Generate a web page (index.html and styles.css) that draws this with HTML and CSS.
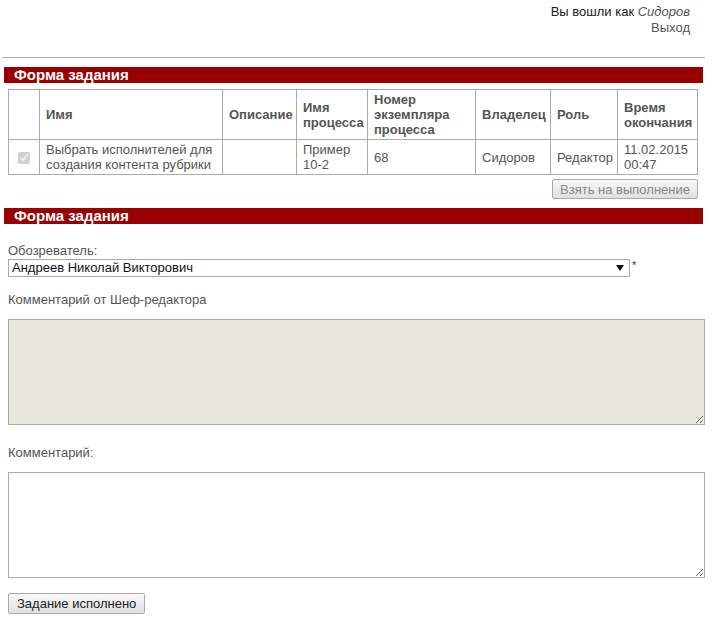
FILE: index.html
```html
<!DOCTYPE html>
<html lang="ru">
<head>
<meta charset="utf-8">
<title>Форма задания</title>
<link rel="stylesheet" href="styles.css">
</head>
<body>
<header class="topbar">
  <div class="user">Вы вошли как <em>Сидоров</em></div>
  <div class="logout">Выход</div>
</header>
<hr class="rule">
<h2 class="section-title">Форма задания</h2>
<table class="task-table">
  <thead>
    <tr>
      <th class="col-check"></th>
      <th class="col-name">Имя</th>
      <th class="col-desc">Описание</th>
      <th class="col-proc">Имя процесса</th>
      <th class="col-num">Номер экземпляра процесса</th>
      <th class="col-owner">Владелец</th>
      <th class="col-role">Роль</th>
      <th class="col-time">Время окончания</th>
    </tr>
  </thead>
  <tbody>
    <tr>
      <td class="col-check"><input type="checkbox" checked disabled></td>
      <td>Выбрать исполнителей для создания контента рубрики</td>
      <td></td>
      <td>Пример 10-2</td>
      <td>68</td>
      <td>Сидоров</td>
      <td>Редактор</td>
      <td>11.02.2015 00:47</td>
    </tr>
  </tbody>
</table>
<div class="take-row">
  <button class="btn btn-take" disabled>Взять на выполнение</button>
</div>
<h2 class="section-title">Форма задания</h2>
<form class="task-form">
  <label class="field-label" for="reviewer">Обозреватель:</label>
  <div class="select-row">
    <div class="select-wrap">
      <select id="reviewer" class="select">
        <option>Андреев Николай Викторович</option>
      </select>
      <span class="select-arrow"></span>
    </div>
    <span class="req">*</span>
  </div>
  <div class="field-label label-chief">Комментарий от Шеф-редактора</div>
  <textarea class="area area-readonly" readonly></textarea>
  <label class="field-label label-comment" for="comment">Комментарий:</label>
  <textarea id="comment" class="area"></textarea>
  <button type="button" class="btn btn-done">Задание исполнено</button>
</form>
</body>
</html>
```

FILE: styles.css
```css
* { box-sizing: border-box; }

body {
  margin: 0;
  font-family: "Liberation Sans", Arial, sans-serif;
  font-size: 13px;
  color: #555;
  background: #fff;
}

.topbar {
  padding: 4px 27px 0 0;
  text-align: right;
  font-size: 13px;
  line-height: 16px;
  color: #222;
}

.topbar em { color: #555; }
.logout { color: #555; }

.rule {
  margin: 21px 12px 0 2px;
  border: 0;
  border-top: 1px solid #aaa;
  height: 0;
}

.section-title {
  margin: 9px 14px 0 4px;
  height: 16px;
  padding-left: 10px;
  background: #990000;
  color: #fff;
  font-size: 15px;
  font-weight: bold;
  line-height: 16px;
}

.task-table {
  margin: 6px 0 0 8px;
  width: 690px;
  table-layout: fixed;
  border-collapse: collapse;
  border: 1px solid #aaa;
}

.task-table th,
.task-table td {
  border: 1px solid #aaa;
  padding: 1px 4px 1px 6px;
  text-align: left;
  vertical-align: middle;
  line-height: 15px;
  font-size: 13px;
  overflow: hidden;
}

.task-table th {
  height: 50px;
  font-weight: bold;
}

.task-table td { height: 35px; }

.task-table .col-check { width: 31px; padding: 0; text-align: center; }
.col-name { width: 183px; }
.col-desc { width: 74px; }
.col-proc { width: 71px; }
.col-num { width: 108px; }
.col-owner { width: 75px; }
.col-role { width: 67px; }

.task-table input[type="checkbox"] {
  margin: 0;
  width: 12px;
  height: 12px;
  vertical-align: middle;
}

.take-row {
  display: flex;
  justify-content: flex-end;
  width: 698px;
  margin-top: 4px;
}

.btn {
  font-family: "Liberation Sans", Arial, sans-serif;
  font-size: 13px;
  border: 1px solid #aaa;
  border-radius: 2px;
  background: linear-gradient(#f8f8f8, #e0e0e0);
  color: #222;
  padding: 0 6px;
  height: 20px;
  white-space: nowrap;
}

.btn-take {
  width: 146px;
  color: #888;
}

.task-form {
  padding: 19px 12px 0 8px;
  display: flex;
  flex-direction: column;
  align-items: flex-start;
}

.field-label {
  font-size: 13px;
  line-height: 16px;
  color: #555;
}

.select-row {
  display: flex;
  align-items: flex-start;
}

.select-wrap {
  position: relative;
  width: 622px;
  height: 18px;
}

.select {
  appearance: none;
  -webkit-appearance: none;
  display: block;
  width: 100%;
  height: 18px;
  border: 1px solid #aaa;
  border-radius: 0;
  background: #fff;
  color: #111;
  font-family: "Liberation Sans", Arial, sans-serif;
  font-size: 13px;
  line-height: 16px;
  padding: 0 20px 0 3px;
}

.select-arrow {
  position: absolute;
  right: 6px;
  top: 6px;
  width: 0;
  height: 0;
  border-left: 4px solid transparent;
  border-right: 4px solid transparent;
  border-top: 6px solid #111;
  pointer-events: none;
}

.req {
  color: #b00000;
  font-size: 11px;
  line-height: 10px;
  margin-left: 2px;
  margin-top: 1px;
}

.label-chief { margin-top: 15px; }

.area {
  display: block;
  width: 697px;
  height: 106px;
  border: 1px solid #aaa;
  border-radius: 0;
  margin-top: 11px;
  resize: vertical;
  font-family: "Liberation Sans", Arial, sans-serif;
}

.area-readonly { background: #e9e8e0; }

.label-comment { margin-top: 20px; }

.btn-done {
  margin-top: 15px;
  height: 21px;
  font-size: 13px;
  padding: 0 8px;
}
```
